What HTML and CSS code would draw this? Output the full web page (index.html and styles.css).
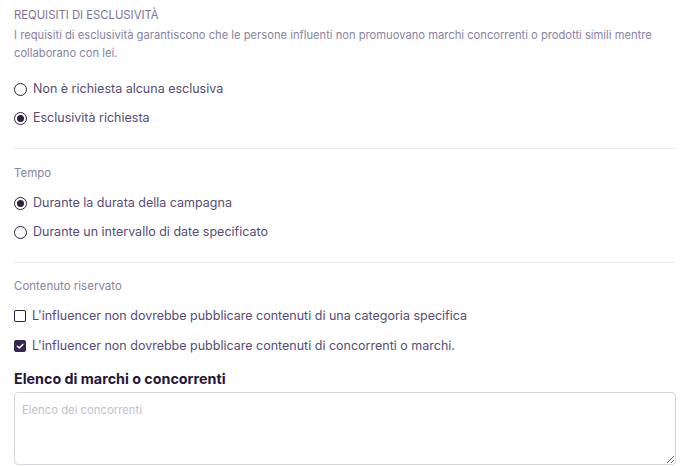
FILE: index.html
```html
<!DOCTYPE html>
<html lang="it">
<head>
<meta charset="utf-8">
<link rel="stylesheet" href="styles.css">
</head>
<body>
<div class="page">
  <section class="section first">
    <h2 class="caps">REQUISITI DI ESCLUSIVITÀ</h2>
    <p class="desc">I requisiti di esclusività garantiscono che le persone influenti non promuovano marchi concorrenti o prodotti simili mentre collaborano con lei.</p>
    <div class="options">
      <label class="opt"><span class="radio"></span>Non è richiesta alcuna esclusiva</label>
      <label class="opt"><span class="radio on"></span>Esclusività richiesta</label>
    </div>
  </section>
  <section class="section">
    <h3 class="sub">Tempo</h3>
    <div class="options">
      <label class="opt"><span class="radio on"></span>Durante la durata della campagna</label>
      <label class="opt"><span class="radio"></span>Durante un intervallo di date specificato</label>
    </div>
  </section>
  <section class="section last">
    <h3 class="sub">Contenuto riservato</h3>
    <div class="options">
      <label class="opt"><span class="check"></span>L'influencer non dovrebbe pubblicare contenuti di una categoria specifica</label>
      <label class="opt"><span class="check on"><svg viewBox="0 0 10 10" width="10" height="10"><path d="M2.4 5.2 L4.3 7 L7.8 3.4" fill="none" stroke="#fff" stroke-width="1.5" stroke-linecap="round" stroke-linejoin="round"/></svg></span>L'influencer non dovrebbe pubblicare contenuti di concorrenti o marchi.</label>
    </div>
    <h4 class="field-label">Elenco di marchi o concorrenti</h4>
    <textarea class="area" placeholder="Elenco dei concorrenti"></textarea>
  </section>
</div>
</body>
</html>
```
FILE: styles.css
```css
* { box-sizing: border-box; }
html, body { margin: 0; padding: 0; background: #fff; }
body { font-family: Inter, "Noto Sans", sans-serif; color: #54486b; }
.page { padding: 0 12px 0 14px; }
.section { border-bottom: 1px solid #eeecf3; padding: 16px 0 21px; }
.section.first { padding-top: 8px; }
.section.last { border-bottom: none; padding-top: 15px; padding-bottom: 0; }
.caps { margin: 0; font-size: 11.3px; font-weight: 400; color: #7c7393; letter-spacing: 0; line-height: 14px; }
.desc { margin: 4px 0 0; font-size: 11.2px; line-height: 18px; color: #8a82a0; }
.sub { margin: 0; font-size: 11.5px; font-weight: 400; color: #8a82a0; line-height: 16px; }
.options { display: flex; flex-direction: column; gap: 11px; margin-top: 13px; }
.first .options { margin-top: 18px; }
.last .options { gap: 12px; }
.opt { display: flex; align-items: center; gap: 6px; font-size: 12.5px; line-height: 18px; color: #584c74; }
.radio { width: 13px; height: 13px; border: 1.5px solid #2d1f42; border-radius: 50%; flex: none; display: flex; align-items: center; justify-content: center; }
.radio.on::after { content: ""; width: 7px; height: 7px; border-radius: 50%; background: #2d1f42; }
.check { width: 12px; height: 12px; border: 1.5px solid #2d1f42; border-radius: 2px; flex: none; display: flex; align-items: center; justify-content: center; }
.check.on { background: #3a2652; border-color: #3a2652; }
.field-label { margin: 16px 0 5px; font-size: 14.3px; font-weight: 700; color: #25163a; line-height: 16px; }
.area { display: block; width: 100%; height: 73px; border: 1px solid #d8d5e0; border-radius: 4px; padding: 10px 7px; font-family: Inter, "Noto Sans", sans-serif; font-size: 11.3px; color: #54486b; resize: vertical; }
.area::placeholder { color: #c4c0cf; }
```
